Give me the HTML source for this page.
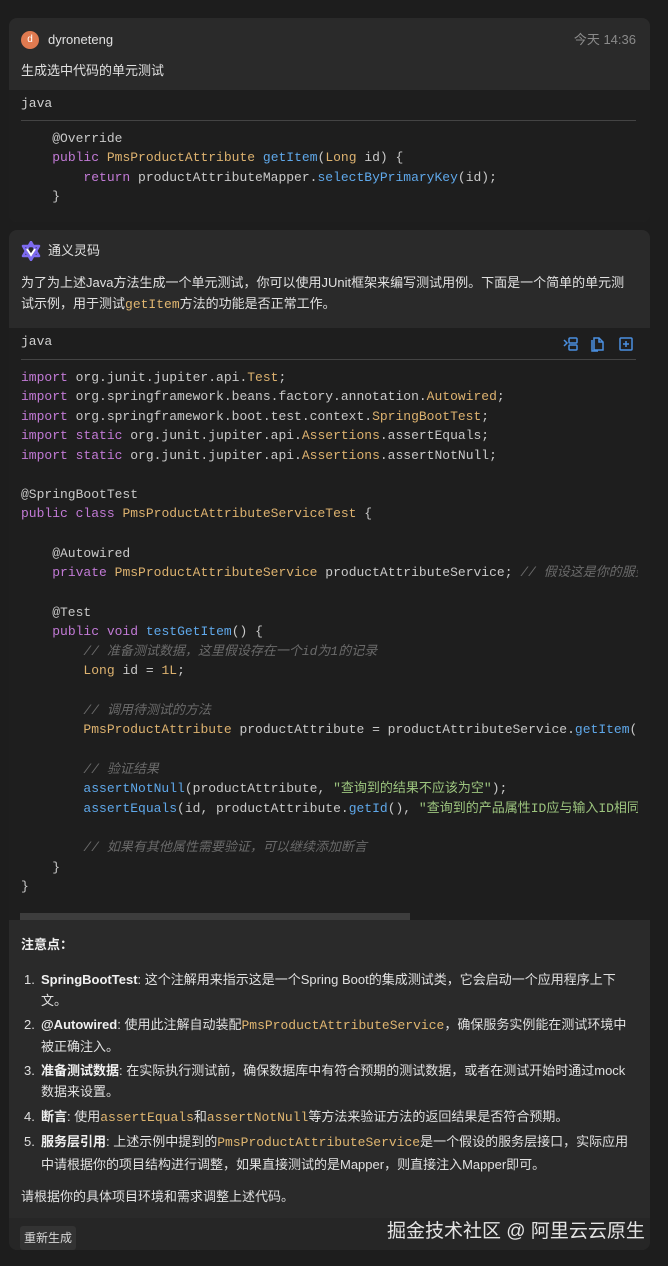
<!DOCTYPE html>
<html><head><meta charset="utf-8"><style>
*{margin:0;padding:0;box-sizing:border-box}
body{width:668px;height:1266px;background:#1d1d1d;font-family:"Liberation Sans","Noto Sans CJK SC",sans-serif;color:#d8d8d8;font-size:13px;position:relative;overflow:hidden}
.card{position:absolute;left:9px;width:641px;background:#2a2a2a;border-radius:8px}
.code{position:absolute;left:9px;width:641px;background:#1e1e1e}
.mono{font-family:"Liberation Mono","Noto Sans CJK SC",monospace;font-size:13px;white-space:pre;color:#c9c9c9}
.ln{position:absolute;left:21px;line-height:20px}
.k{color:#c27ad6}.t{color:#ddb26f}.f{color:#5fa8ea}.c{color:#6a6a6a;font-style:italic}.s{color:#9cc47e}
.txt{position:absolute;left:21px;width:615px;line-height:21px;color:#e0e0e0}
.ic{color:#e0b670;font-family:"Liberation Mono","Noto Sans CJK SC",monospace}
b{color:#f0f0f0}
</style></head><body>
<div class="card" style="top:18px;height:204px;overflow:hidden">
<div style="position:absolute;left:0;top:72px;width:641px;height:132px;background:#1e1e1e"></div>
</div>
<div style="position:absolute;left:21px;top:31px;width:18px;height:18px;border-radius:50%;background:#e07a50;color:#fff;font-size:10px;text-align:center;line-height:18px">d</div>
<div style="position:absolute;left:48px;top:31px;line-height:18px;font-size:13px;color:#e0e0e0">dyroneteng</div>
<div style="position:absolute;right:32px;top:31px;line-height:18px;font-size:13px;color:#8a8a8a">今天 14:36</div>
<div class="txt" style="top:60px">生成选中代码的单元测试</div>
<div class="mono ln" style="top:94px;color:#d0d0d0">java</div>
<div style="position:absolute;left:21px;top:120px;width:615px;height:1px;background:#444"></div>
<div class="mono ln" style="top:129px">    @Override</div>
<div class="mono ln" style="top:148px">    <span class="k">public</span> <span class="t">PmsProductAttribute</span> <span class="f">getItem</span>(<span class="t">Long</span> id) {</div>
<div class="mono ln" style="top:168px">        <span class="k">return</span> productAttributeMapper.<span class="f">selectByPrimaryKey</span>(id);</div>
<div class="mono ln" style="top:187px">    }</div>

<div class="card" style="top:230px;height:1020px;overflow:hidden"></div>
<svg style="position:absolute;left:21px;top:241px" width="20" height="20" viewBox="0 0 20 20"><path d="M10 1 L18 15 L2 15 Z M10 19 L2 5 L18 5 Z" fill="none" stroke="#7d6bf0" stroke-width="2.5" stroke-linejoin="round"/><path d="M6 8 L10 14 L14 8" fill="none" stroke="#fff" stroke-width="2"/></svg>
<div style="position:absolute;left:48px;top:242px;line-height:18px;color:#e0e0e0">通义灵码</div>
<div class="txt" style="top:272px">为了为上述Java方法生成一个单元测试，你可以使用JUnit框架来编写测试用例。下面是一个简单的单元测试示例，用于测试<span class="ic">getItem</span>方法的功能是否正常工作。</div>

<div class="code" style="top:328px;height:592px;overflow:hidden">
<div style="position:absolute;left:11px;top:585px;width:390px;height:7px;background:#3d3d3d"></div>
</div>
<div class="mono ln" style="top:332px;color:#d0d0d0">java</div>
<svg style="position:absolute;left:563px;top:336px" width="76" height="16" viewBox="0 0 76 16" fill="none" stroke="#4a8fe0" stroke-width="1.5"><path d="M1 4 L4 7 L1 10"/><rect x="6" y="2" width="8" height="5" rx="1"/><rect x="6" y="9" width="8" height="5" rx="1"/><path d="M31 2 H36 L40 6 V14 H31 Z M36 2 V6 H40"/><path d="M29 4 V15 H35"/><rect x="57" y="2" width="12" height="12" rx="1"/><path d="M63 5 V11 M60 8 H66"/></svg>
<div style="position:absolute;left:21px;top:359px;width:615px;height:1px;background:#444"></div>
<div class="mono ln" style="top:368px"><span class="k">import</span> org.junit.jupiter.api.<span class="t">Test</span>;</div>
<div class="mono ln" style="top:387px"><span class="k">import</span> org.springframework.beans.factory.annotation.<span class="t">Autowired</span>;</div>
<div class="mono ln" style="top:407px"><span class="k">import</span> org.springframework.boot.test.context.<span class="t">SpringBootTest</span>;</div>
<div class="mono ln" style="top:426px"><span class="k">import static</span> org.junit.jupiter.api.<span class="t">Assertions</span>.assertEquals;</div>
<div class="mono ln" style="top:446px"><span class="k">import static</span> org.junit.jupiter.api.<span class="t">Assertions</span>.assertNotNull;</div>
<div class="mono ln" style="top:485px">@SpringBootTest</div>
<div class="mono ln" style="top:504px"><span class="k">public class</span> <span class="t">PmsProductAttributeServiceTest</span> {</div>
<div class="mono ln" style="top:544px">    @Autowired</div>
<div class="mono ln" style="top:563px;width:617px;overflow:hidden">    <span class="k">private</span> <span class="t">PmsProductAttributeService</span> productAttributeService; <span class="c">// 假设这是你的服务层接口</span></div>
<div class="mono ln" style="top:603px">    @Test</div>
<div class="mono ln" style="top:622px">    <span class="k">public void</span> <span class="f">testGetItem</span>() {</div>
<div class="mono ln" style="top:642px">        <span class="c">// 准备测试数据，这里假设存在一个id为1的记录</span></div>
<div class="mono ln" style="top:661px">        <span class="t">Long</span> id = <span class="t">1L</span>;</div>
<div class="mono ln" style="top:701px">        <span class="c">// 调用待测试的方法</span></div>
<div class="mono ln" style="top:720px;width:617px;overflow:hidden">        <span class="t">PmsProductAttribute</span> productAttribute = productAttributeService.<span class="f">getItem</span>(id);</div>
<div class="mono ln" style="top:760px">        <span class="c">// 验证结果</span></div>
<div class="mono ln" style="top:779px">        <span class="f">assertNotNull</span>(productAttribute, <span class="s">"查询到的结果不应该为空"</span>);</div>
<div class="mono ln" style="top:799px;width:617px;overflow:hidden">        <span class="f">assertEquals</span>(id, productAttribute.<span class="f">getId</span>(), <span class="s">"查询到的产品属性ID应与输入ID相同"</span>);</div>
<div class="mono ln" style="top:838px">        <span class="c">// 如果有其他属性需要验证，可以继续添加断言</span></div>
<div class="mono ln" style="top:858px">    }</div>
<div class="mono ln" style="top:877px">}</div>

<div class="txt" style="top:934px"><b>注意点：</b></div>
<div class="txt" style="top:970px;left:24px;width:612px;padding-left:17px;line-height:20.5px"><span style="position:absolute;left:0">1.</span><b>SpringBootTest</b>: 这个注解用来指示这是一个Spring Boot的集成测试类，它会启动一个应用程序上下文。</div>
<div class="txt" style="top:1015px;left:24px;width:612px;padding-left:17px;line-height:20.5px"><span style="position:absolute;left:0">2.</span><b>@Autowired</b>: 使用此注解自动装配<span class="ic">PmsProductAttributeService</span>，确保服务实例能在测试环境中被正确注入。</div>
<div class="txt" style="top:1061px;left:24px;width:612px;padding-left:17px;line-height:20.5px"><span style="position:absolute;left:0">3.</span><b>准备测试数据</b>: 在实际执行测试前，确保数据库中有符合预期的测试数据，或者在测试开始时通过mock数据来设置。</div>
<div class="txt" style="top:1107px;left:24px;width:612px;padding-left:17px;line-height:20.5px"><span style="position:absolute;left:0">4.</span><b>断言</b>: 使用<span class="ic">assertEquals</span>和<span class="ic">assertNotNull</span>等方法来验证方法的返回结果是否符合预期。</div>
<div class="txt" style="top:1131px;left:24px;width:612px;padding-left:17px;line-height:21.5px"><span style="position:absolute;left:0">5.</span><b>服务层引用</b>: 上述示例中提到的<span class="ic">PmsProductAttributeService</span>是一个假设的服务层接口，实际应用中请根据你的项目结构进行调整，如果直接测试的是Mapper，则直接注入Mapper即可。</div>
<div class="txt" style="top:1186px">请根据你的具体项目环境和需求调整上述代码。</div>
<div style="position:absolute;left:9px;top:1218px;width:641px;height:32px;background:#262626;border-radius:0 0 8px 8px"></div>
<div style="position:absolute;left:20px;top:1226px;width:56px;height:24px;background:#333;border-radius:3px;font-size:12px;line-height:24px;text-align:center;color:#d8d8d8">重新生成</div>
<div style="position:absolute;left:387px;top:1219px;font-size:19px;line-height:26px;color:#e4e4e4">掘金技术社区 @ 阿里云云原生</div>
</body></html>
